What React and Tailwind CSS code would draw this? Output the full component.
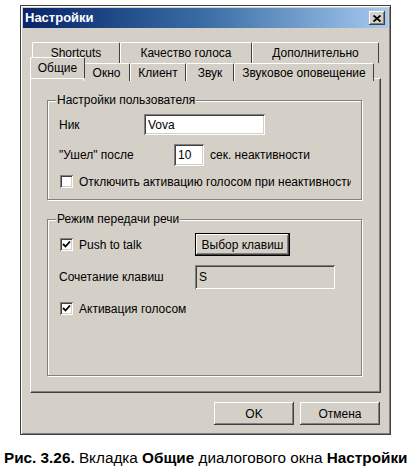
import React from 'react';

const raised =
  'shadow-[inset_-1px_-1px_0_#404040,inset_1px_1px_0_#ffffff,inset_-2px_-2px_0_#808080,inset_2px_2px_0_#d4d0c8]';
const sunken =
  'shadow-[inset_1px_1px_0_#808080,inset_-1px_-1px_0_#ffffff,inset_2px_2px_0_#404040,inset_-2px_-2px_0_#d4d0c8]';

const CheckBox = ({ checked }) => (
  <span className={`w-[13px] h-[13px] bg-white shrink-0 flex items-center justify-center ${sunken}`}>
    {checked && (
      <svg width="9" height="9" viewBox="0 0 9 9">
        <path d="M1 4 L3.5 6.5 L8 1.5" stroke="#000" strokeWidth="1.8" fill="none" />
      </svg>
    )}
  </span>
);

const Tab = ({ label, w, active }) => (
  <div
    className={`h-full flex items-center justify-center bg-[#d4d0c8] border-l border-t border-white border-r border-r-[#404040] rounded-t-[2px] text-black ${
      active ? 'relative z-10 -mx-[2px]' : 'mt-[3px]'
    }`}
    style={{ width: w }}
  >
    {label}
  </div>
);

const GroupBox = ({ title, h, children }) => (
  <fieldset
    className="border border-[#808080] shadow-[inset_1px_1px_0_#ffffff,1px_1px_0_#ffffff] px-0"
    style={{ height: h }}
  >
    <legend className="ml-[8px] px-[1px] bg-[#d4d0c8] leading-[14px]">{title}</legend>
    <div className="pl-[11px] flex flex-col">{children}</div>
  </fieldset>
);

export default function App() {
  return (
    <div className="w-[414px] h-[470px] bg-white overflow-hidden font-['Liberation_Sans',Arial,sans-serif] text-[12px] text-black">
      <div className="pt-[5px] pl-[20px]">
        <div className="w-[371px] h-[430px] bg-[#d4d0c8] border border-[#404040] shadow-[inset_1px_1px_0_#ffffff,inset_-1px_-1px_0_#808080] p-[2px] flex flex-col">
          {/* title bar */}
          <div className="h-[20px] flex items-center justify-between bg-gradient-to-r from-[#0a246a] via-[#3a6ea5] to-[#a6caf0] pl-[2px] pr-[3px]">
            <span className="text-white font-bold text-[13px]">Настройки</span>
            <span className={`w-[16px] h-[14px] bg-[#d4d0c8] flex items-center justify-center ${raised}`}>
              <svg width="8" height="7" viewBox="0 0 8 7">
                <path d="M0.5 0.5 L7.5 6.5 M7.5 0.5 L0.5 6.5" stroke="#000" strokeWidth="1.8" />
              </svg>
            </span>
          </div>

          {/* tabs */}
          <div className="mt-[11px] mx-[9px] h-[21px] flex">
            <Tab label="Shortcuts" w={88} />
            <Tab label="Качество голоса" w={132} />
            <Tab label="Дополнительно" w={127} />
          </div>
          <div className="-mt-[3px] mx-[9px] h-[21px] flex items-start relative z-10">
            <Tab label="Общие" w={55} active />
            <div className="h-[18px] mt-[3px] flex">
              <Tab label="Окно" w={47} />
              <Tab label="Клиент" w={56} />
              <Tab label="Звук" w={48} />
              <Tab label="Звуковое оповещение" w={140} />
            </div>
          </div>

          {/* panel */}
          <div className="mx-[7px] h-[315px] border-l border-t border-white border-r border-b border-r-[#404040] border-b-[#404040] shadow-[inset_-1px_-1px_0_#808080] pt-[14px] pl-[16px] pr-[18px]">
            <GroupBox title="Настройки пользователя" h={107}>
              <div className="mt-[7px] h-[21px] flex items-center">
                <span className="w-[85px]">Ник</span>
                <div className={`w-[121px] h-[21px] bg-white flex items-center pl-[4px] ${sunken}`}>Vova</div>
              </div>
              <div className="mt-[9px] h-[21px] flex items-center">
                <span className="w-[115px]">"Ушел" после</span>
                <div className={`w-[30px] h-[22px] bg-white flex items-center pl-[4px] ${sunken}`}>10</div>
                <span className="ml-[6px]">сек. неактивности</span>
              </div>
              <div className="mt-[10px] h-[13px] flex items-center w-[292px] overflow-hidden whitespace-nowrap">
                <span className="ml-[1px]"><CheckBox /></span>
                <span className="ml-[6px]">Отключить активацию голосом при неактивности</span>
              </div>
            </GroupBox>

            <div className="mt-[12px]">
              <GroupBox title="Режим передачи речи" h={164}>
                <div className="mt-[7px] h-[23px] flex items-center">
                  <div className="w-[136px] flex items-center">
                    <span className="ml-[1px]"><CheckBox checked /></span>
                    <span className="ml-[6px]">Push to talk</span>
                  </div>
                  <div className={`w-[95px] h-[23px] bg-[#d4d0c8] border border-black flex items-center justify-center ${raised}`}>
                    Выбор клавиш
                  </div>
                </div>
                <div className="mt-[9px] h-[23px] flex items-center">
                  <span className="w-[136px]">Сочетание клавиш</span>
                  <div className={`w-[140px] h-[24px] bg-[#d4d0c8] flex items-center pl-[4px] ${sunken}`}>S</div>
                </div>
                <div className="mt-[14px] h-[13px] flex items-center">
                  <span className="ml-[1px]"><CheckBox checked /></span>
                  <span className="ml-[6px]">Активация голосом</span>
                </div>
              </GroupBox>
            </div>
          </div>

          {/* buttons */}
          <div className="mt-[9px] pr-[8px] flex justify-end gap-[6px]">
            <div className={`w-[80px] h-[23px] flex items-center justify-center ${raised}`}>OK</div>
            <div className={`w-[80px] h-[23px] flex items-center justify-center ${raised}`}>Отмена</div>
          </div>
        </div>
      </div>

      <p className="mt-[13px] pl-[4px] text-[15.3px] leading-[20px] whitespace-nowrap">
        <b>Рис. 3.26.</b> Вкладка <b>Общие</b> диалогового окна <b>Настройки</b>
      </p>
    </div>
  );
}
